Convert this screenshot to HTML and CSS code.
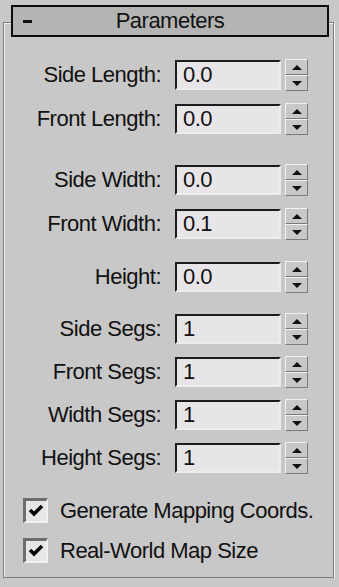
FILE: index.html
```html
<!DOCTYPE html>
<html lang="en">

<head>
    <meta charset="UTF-8">
    <meta name="viewport" content="width=device-width, initial-scale=1.0">
    <title>Parameters</title>
    <link rel="stylesheet" href="styles.css">
</head>

<body>
    <div class="rollout">
        <div class="rollout-head">
            <span class="minus"></span>
            <span class="title">Parameters</span>
            <span></span>
        </div>
        <div class="rollout-body">
            <div class="group">
                <div class="row">
                    <label class="lbl">Side Length:</label>
                    <div class="field">0.0</div>
                    <div class="spinner"><span class="up"></span><span class="down"></span></div>
                </div>
                <div class="row">
                    <label class="lbl">Front Length:</label>
                    <div class="field">0.0</div>
                    <div class="spinner"><span class="up"></span><span class="down"></span></div>
                </div>
            </div>
            <div class="group g2">
                <div class="row">
                    <label class="lbl">Side Width:</label>
                    <div class="field">0.0</div>
                    <div class="spinner"><span class="up"></span><span class="down"></span></div>
                </div>
                <div class="row">
                    <label class="lbl">Front Width:</label>
                    <div class="field">0.1</div>
                    <div class="spinner"><span class="up"></span><span class="down"></span></div>
                </div>
            </div>
            <div class="group g3">
                <div class="row">
                    <label class="lbl">Height:</label>
                    <div class="field">0.0</div>
                    <div class="spinner"><span class="up"></span><span class="down"></span></div>
                </div>
            </div>
            <div class="group g4">
                <div class="row">
                    <label class="lbl">Side Segs:</label>
                    <div class="field">1</div>
                    <div class="spinner"><span class="up"></span><span class="down"></span></div>
                </div>
                <div class="row">
                    <label class="lbl">Front Segs:</label>
                    <div class="field">1</div>
                    <div class="spinner"><span class="up"></span><span class="down"></span></div>
                </div>
                <div class="row">
                    <label class="lbl">Width Segs:</label>
                    <div class="field">1</div>
                    <div class="spinner"><span class="up"></span><span class="down"></span></div>
                </div>
                <div class="row">
                    <label class="lbl">Height Segs:</label>
                    <div class="field">1</div>
                    <div class="spinner"><span class="up"></span><span class="down"></span></div>
                </div>
            </div>
            <div class="checks">
                <div class="check">
                    <span class="box">
                        <svg width="16" height="14" viewBox="0 0 16 14">
                            <polyline points="2,6 6,10 14,2" fill="none" stroke="#000" stroke-width="3.5" />
                        </svg>
                    </span>
                    <span>Generate Mapping Coords.</span>
                </div>
                <div class="check">
                    <span class="box">
                        <svg width="16" height="14" viewBox="0 0 16 14">
                            <polyline points="2,6 6,10 14,2" fill="none" stroke="#000" stroke-width="3.5" />
                        </svg>
                    </span>
                    <span>Real-World Map Size</span>
                </div>
            </div>
        </div>
    </div>
</body>

</html>
```

FILE: styles.css
```css
body {
    margin: 0;
    background-color: #c8c8c8;
    font-family: "Liberation Sans", Arial, sans-serif;
    font-size: 22px;
    letter-spacing: -0.5px;
    color: #111;
}

.rollout {
    padding-top: 5px;
    width: 339px;
}

.rollout-head {
    position: relative;
    z-index: 1;
    display: grid;
    grid-template-columns: 1fr auto 1fr;
    align-items: center;
    height: 28px;
    margin: 0 10px 0 11px;
    border: 2px solid #0c0c0c;
    background-color: #b4b4b4;
}

.minus {
    width: 9px;
    height: 3px;
    margin-left: 10px;
    background-color: #111;
}

.title {
    line-height: 28px;
}

.rollout-body {
    margin: -15px 5px 0 3px;
    padding: 37px 0 14px 0;
    border: 1px solid #7c7c7c;
    box-shadow: inset 1px 1px 0 #f4f4f4, 1px 1px 0 #f4f4f4;
}

.group {
    display: flex;
    flex-direction: column;
    gap: 14px;
}

.g2 {
    margin-top: 31px;
}

.g3 {
    margin-top: 23px;
}

.g4 {
    margin-top: 22px;
    gap: 13px;
}

.row {
    display: flex;
    align-items: center;
    height: 30px;
}

.lbl {
    width: 157px;
    text-align: right;
}

.field {
    box-sizing: border-box;
    width: 106px;
    height: 30px;
    margin-left: 14px;
    padding-left: 6px;
    line-height: 26px;
    border-style: solid;
    border-width: 2px;
    border-color: #1c1c1c #ececec #ececec #1c1c1c;
    background-color: #e8e5e9;
}

.spinner {
    box-sizing: border-box;
    display: flex;
    flex-direction: column;
    width: 23px;
    height: 32px;
    margin-left: 4px;
}

.spinner span {
    flex: 1;
    display: flex;
    align-items: center;
    justify-content: center;
    border-style: solid;
    border-width: 1px;
    border-color: #f2f2f2 #7a7a7a #7a7a7a #f2f2f2;
    background-color: #c8c8c8;
}

.up::before {
    content: "";
    border-left: 5px solid transparent;
    border-right: 5px solid transparent;
    border-bottom: 5px solid #111;
}

.down::before {
    content: "";
    border-left: 5px solid transparent;
    border-right: 5px solid transparent;
    border-top: 5px solid #111;
}

.checks {
    display: flex;
    flex-direction: column;
    gap: 15px;
    margin-top: 25px;
}

.check {
    display: flex;
    align-items: center;
    height: 25px;
}

.box {
    box-sizing: border-box;
    display: flex;
    align-items: center;
    justify-content: center;
    width: 25px;
    height: 25px;
    margin: 0 12px 0 19px;
    border-style: solid;
    border-width: 3px 2px 2px 3px;
    border-color: #6e6e6e #f0f0f0 #f0f0f0 #6e6e6e;
    background-color: #e8e5e9;
}
```
